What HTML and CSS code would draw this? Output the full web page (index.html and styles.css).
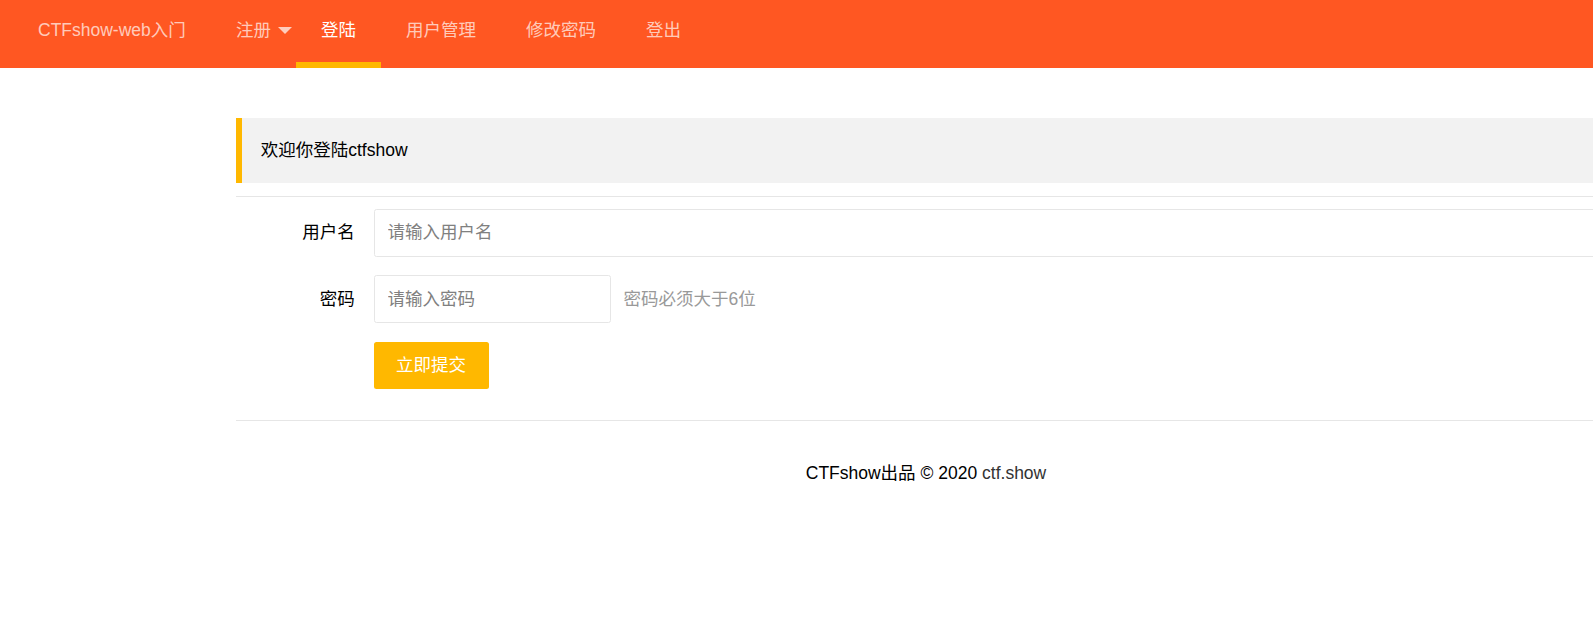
FILE: index.html
```html
<!DOCTYPE html>
<html lang="zh-CN">
<head>
<meta charset="utf-8">
<title>CTFshow-web入门</title>
<link rel="stylesheet" href="styles.css">
</head>
<body>
<header class="header">
  <div class="logo">CTFshow-web入门</div>
  <ul class="nav">
    <li class="nav-item"><a class="nav-link">注册</a><span class="caret"></span></li>
    <li class="nav-item active"><a class="nav-link">登陆</a></li>
    <li class="nav-item"><a class="nav-link">用户管理</a></li>
    <li class="nav-item"><a class="nav-link">修改密码</a></li>
    <li class="nav-item"><a class="nav-link">登出</a></li>
  </ul>
</header>
<main class="main">
  <blockquote class="quote">欢迎你登陆ctfshow</blockquote>
  <hr class="sep">
  <form class="form">
    <div class="form-item">
      <label class="form-label">用户名</label>
      <div class="input-block"><input class="input" type="text" placeholder="请输入用户名"></div>
    </div>
    <div class="form-item">
      <label class="form-label">密码</label>
      <div class="input-inline"><input class="input" type="password" placeholder="请输入密码"></div>
      <div class="form-aux">密码必须大于6位</div>
    </div>
    <div class="form-item no-label">
      <button class="btn" type="button">立即提交</button>
    </div>
  </form>
  <hr class="sep">
  <footer class="footer">CTFshow出品 © 2020 <a class="footer-link">ctf.show</a></footer>
</main>
</body>
</html>
```

FILE: styles.css
```css
html, body {
  margin: 0;
  padding: 0;
  overflow: hidden;
  background: #fff;
}

body {
  font-family: "Liberation Sans", Arial, "Noto Sans CJK SC", sans-serif;
  font-size: 17.5px;
  color: #000;
}

.header {
  display: flex;
  height: 68px;
  background: #FF5722;
}

.logo {
  flex: none;
  width: 173px;
  padding-left: 38px;
  line-height: 60px;
  white-space: nowrap;
  color: rgba(255, 255, 255, 0.7);
}

.nav {
  display: flex;
  margin: 0;
  padding: 0;
  list-style: none;
}

.nav-item {
  position: relative;
  height: 68px;
  padding: 0 25px;
  line-height: 60px;
  white-space: nowrap;
  color: rgba(255, 255, 255, 0.7);
}

.nav-link {
  color: inherit;
  text-decoration: none;
}

.nav-item.active {
  color: #fff;
}

.nav-item.active::after {
  content: "";
  position: absolute;
  left: 0;
  right: 0;
  bottom: 0;
  height: 6px;
  background: #FFB800;
}

.caret {
  position: absolute;
  right: 4px;
  top: 27px;
  width: 0;
  height: 0;
  border-left: 7.5px solid transparent;
  border-right: 7.5px solid transparent;
  border-top: 7px solid rgba(255, 255, 255, 0.7);
}

.main {
  width: 1380px;
  margin-left: 236px;
  padding-top: 50px;
}

.quote {
  margin: 0 0 12.5px;
  padding: 18.75px;
  line-height: 27.5px;
  border-left: 6px solid #FFB800;
  background: #f2f2f2;
}

.sep {
  height: 0;
  margin: 12.5px 0;
  border: 0;
  border-top: 1px solid #e6e6e6;
}

.form {
  display: flow-root;
  margin: 0;
}

.form-item {
  display: flex;
  align-items: flex-start;
  margin-bottom: 18.75px;
}

.form-item.no-label {
  padding-left: 137.5px;
}

.form-label {
  flex: none;
  width: 100px;
  padding: 11.25px 18.75px;
  line-height: 25px;
  text-align: right;
  white-space: nowrap;
}

.input-block {
  flex: 1;
}

.input-inline {
  flex: none;
  width: 237.5px;
  margin-right: 12.5px;
}

.input {
  display: block;
  width: 100%;
  height: 47.5px;
  box-sizing: border-box;
  padding: 0 13px;
  border: 1px solid #e6e6e6;
  border-radius: 2.5px;
  font-family: inherit;
  font-size: 17.5px;
  color: #000;
  background: #fff;
  outline: none;
}

.input::placeholder {
  color: #808080;
}

.form-aux {
  padding: 11.25px 0;
  line-height: 25px;
  color: #999;
  white-space: nowrap;
}

.btn {
  height: 47.5px;
  padding: 0 22.5px;
  border: 0;
  border-radius: 2.5px;
  background: #FFB800;
  color: #fff;
  font-family: inherit;
  font-size: 17.5px;
  line-height: 47.5px;
  cursor: pointer;
}

.footer {
  padding-top: 24.5px;
  line-height: 30px;
  text-align: center;
}

.footer-link {
  color: #333;
  text-decoration: none;
}
```
